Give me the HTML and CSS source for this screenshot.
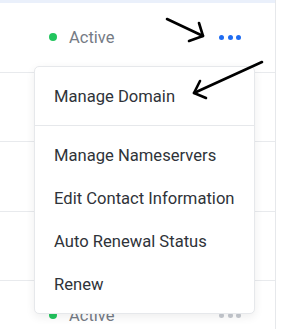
FILE: index.html
```html
<!DOCTYPE html>
<html lang="en">
  <head>
    <meta charset="UTF-8" />
    <meta name="viewport" content="width=device-width, initial-scale=1.0" />
    <title>Domains</title>
    <link rel="stylesheet" href="styles.css">
  </head>
  <body>
    <!-- Domains Table -->
    <div class="table">
      <div class="table-head"></div>
      <div class="row">
        <span class="status"><span class="dot"></span>Active</span>
        <button class="more more-open"><i></i><i></i><i></i></button>
      </div>
      <!-- rows under the open menu -->
      <div class="row"></div>
      <div class="row"></div>
      <div class="row"></div>
      <div class="row">
        <span class="status"><span class="dot"></span>Active</span>
        <button class="more"><i></i><i></i><i></i></button>
      </div>
    </div>

    <!-- Actions Menu -->
    <div class="menu">
      <div class="menu-group">
        <a class="menu-item" href="#">Manage Domain</a>
      </div>
      <div class="menu-group">
        <a class="menu-item" href="#">Manage Nameservers</a>
        <a class="menu-item" href="#">Edit Contact Information</a>
        <a class="menu-item" href="#">Auto Renewal Status</a>
        <a class="menu-item" href="#">Renew</a>
      </div>
    </div>

    <!-- Annotation Arrows -->
    <svg class="arrows" width="295" height="329" viewBox="0 0 295 329">
      <g fill="none" stroke="#000" stroke-width="2.6" stroke-linecap="round" stroke-linejoin="round">
        <path d="M167 19 L203 36" />
        <path d="M199 23 L203 36 L189 41" />
        <path d="M262 62 L194 93" />
        <path d="M200 81 L194 93 L206 98" />
      </g>
    </svg>
  </body>
</html>
```

FILE: styles.css
```css
/* Base Styles */
* {
  margin: 0;
  padding: 0;
  box-sizing: border-box;
}

body {
  font-family: Roboto, "Liberation Sans", sans-serif;
  background: #fff;
  position: relative;
  width: 295px;
  height: 329px;
  overflow: hidden;
}

/* Table */
.table {
  width: 276px;
  height: 329px;
  overflow: hidden;
  border-right: 1px solid #e6e8eb;
}

.table-head {
  height: 3px;
  background: #eaf0fb;
}

.row {
  height: 69.5px;
  display: flex;
  align-items: center;
  justify-content: space-between;
  padding: 0 34px 0 49px;
  border-bottom: 1px solid #e8eaed;
}

.status {
  display: flex;
  align-items: center;
  gap: 12px;
  font-size: 16.5px;
  color: #757b85;
}

.dot {
  width: 8px;
  height: 8px;
  border-radius: 50%;
  background: #22c55e;
}

.more {
  display: flex;
  gap: 3.5px;
  background: none;
  border: none;
}

.more i {
  width: 5px;
  height: 5px;
  border-radius: 50%;
  background: #c6cad0;
}

.more-open i {
  background: #1f6cf2;
}

/* Menu */
.menu {
  position: absolute;
  top: 66px;
  left: 34px;
  width: 221px;
  background: #fff;
  border: 1px solid #e6e8eb;
  border-radius: 5px;
  box-shadow: 0 3px 10px rgba(0, 0, 0, 0.07);
}

.menu-group {
  display: flex;
  flex-direction: column;
  padding: 8px 0 7px;
}

.menu-group + .menu-group {
  border-top: 1px solid #e6e8eb;
  padding-top: 8px;
}

.menu-item {
  height: 43px;
  display: flex;
  align-items: center;
  padding-left: 19px;
  font-size: 16.6px;
  color: #2f3339;
  text-decoration: none;
}

/* Annotations */
.arrows {
  position: absolute;
  top: 0;
  left: 0;
}
```
